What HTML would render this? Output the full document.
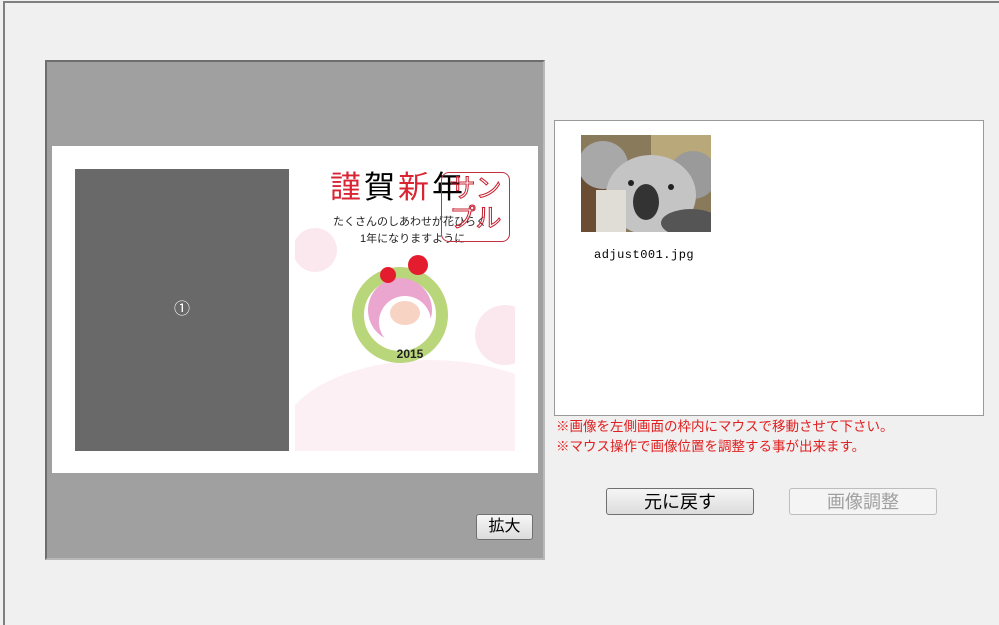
<!DOCTYPE html>
<html><head><meta charset="utf-8"><style>
body{margin:0;width:999px;height:622px;background:#f0f0f0;position:relative;overflow:hidden;font-family:"Liberation Sans","Noto Sans CJK JP",sans-serif}
.a{position:absolute}
.btn{position:absolute;border:1px solid #707070;border-radius:3px;background:linear-gradient(#f6f6f6,#dcdcdc);text-align:center;box-sizing:border-box}
</style></head><body>
<div class="a" style="left:3px;top:1px;width:996px;height:622px;border-left:2px solid #808080;border-top:2px solid #808080"></div>
<div class="a" style="left:45px;top:60px;width:496px;height:496px;background:#a0a0a0;border:2px solid #6e6e6e;border-right-color:#b8b8b8;border-bottom-color:#b8b8b8"></div>
<div class="a" style="left:52px;top:146px;width:486px;height:327px;background:#fff"></div>
<div class="a" style="left:75px;top:169px;width:214px;height:282px;background:#696969;color:#fff;font-size:16px;text-align:center;line-height:282px">①</div>
<svg class="a" style="left:295px;top:150px" width="220" height="301">
<ellipse cx="135" cy="290" rx="150" ry="80" fill="#fdf0f5"/>
<circle cx="20" cy="100" r="22" fill="#fbe8ef"/>
<circle cx="210" cy="185" r="30" fill="#fbe8ef"/>
<circle cx="105" cy="165" r="42" fill="none" stroke="#b9d67a" stroke-width="12"/>
<circle cx="105" cy="160" r="32" fill="#eaa6cf"/>
<circle cx="110" cy="172" r="26" fill="#fff"/>
<ellipse cx="110" cy="163" rx="15" ry="12" fill="#f7d3c4"/>
<circle cx="93" cy="125" r="8" fill="#e41d2e"/><circle cx="123" cy="115" r="10" fill="#e41d2e"/>
<text x="115" y="208" font-size="12" font-weight="bold" text-anchor="middle" fill="#222" font-family="Liberation Sans">2015</text>
</svg>
<div class="a" style="left:330px;top:168px;font-size:31px;letter-spacing:3px;line-height:40px;white-space:nowrap"><span style="color:#d92433">謹</span>賀<span style="color:#d92433">新</span>年</div>
<div class="a" style="left:333px;top:213px;font-size:11px;color:#222;white-space:nowrap">たくさんのしあわせが花ひらく</div>
<div class="a" style="left:360px;top:230px;font-size:11px;color:#222;white-space:nowrap">1年になりますように</div>
<div class="a" style="left:441px;top:172px;width:67px;height:68px;border:1px solid #c03040;border-radius:8px;color:transparent;-webkit-text-stroke:1px #c82030;font-size:26px;line-height:30px;text-align:center">サン<br>プル</div>
<div class="btn" style="left:476px;top:514px;width:57px;height:26px;font-size:16px;line-height:24px">拡大</div>
<div class="a" style="left:554px;top:120px;width:428px;height:294px;background:#fff;border:1px solid #9a9a9a"></div>
<svg class="a" style="left:581px;top:135px" width="130" height="97">
<rect width="130" height="97" fill="#8a7a5c"/><rect x="70" width="60" height="40" fill="#b8a87a"/>
<rect x="0" y="30" width="25" height="67" fill="#6b4d33"/>
<ellipse cx="22" cy="30" rx="25" ry="24" fill="#a8a8a8"/><ellipse cx="112" cy="40" rx="24" ry="24" fill="#9a9a9a"/>
<ellipse cx="70" cy="60" rx="45" ry="40" fill="#c4c4c4"/>
<ellipse cx="65" cy="67" rx="13" ry="18" fill="#333"/>
<rect x="15" y="55" width="30" height="42" fill="#e0ddd6"/><ellipse cx="110" cy="88" rx="30" ry="14" fill="#555"/>
<circle cx="50" cy="48" r="3" fill="#222"/><circle cx="90" cy="52" r="3" fill="#222"/>
</svg>
<div class="a" style="left:594px;top:248px;font-family:'Liberation Mono',monospace;font-size:12px;letter-spacing:0.5px">adjust001.jpg</div>
<div class="a" style="left:556px;top:417px;font-size:13.5px;color:#e02020;line-height:20px;white-space:nowrap">※画像を左側画面の枠内にマウスで移動させて下さい。<br>※マウス操作で画像位置を調整する事が出来ます。</div>
<div class="btn" style="left:606px;top:488px;width:148px;height:27px;font-size:18px;line-height:26px">元に戻す</div>
<div class="btn" style="left:789px;top:488px;width:148px;height:27px;font-size:18px;line-height:26px;color:#a0a0a0;border-color:#bdbdbd;background:#f4f4f4">画像調整</div>
</body></html>
